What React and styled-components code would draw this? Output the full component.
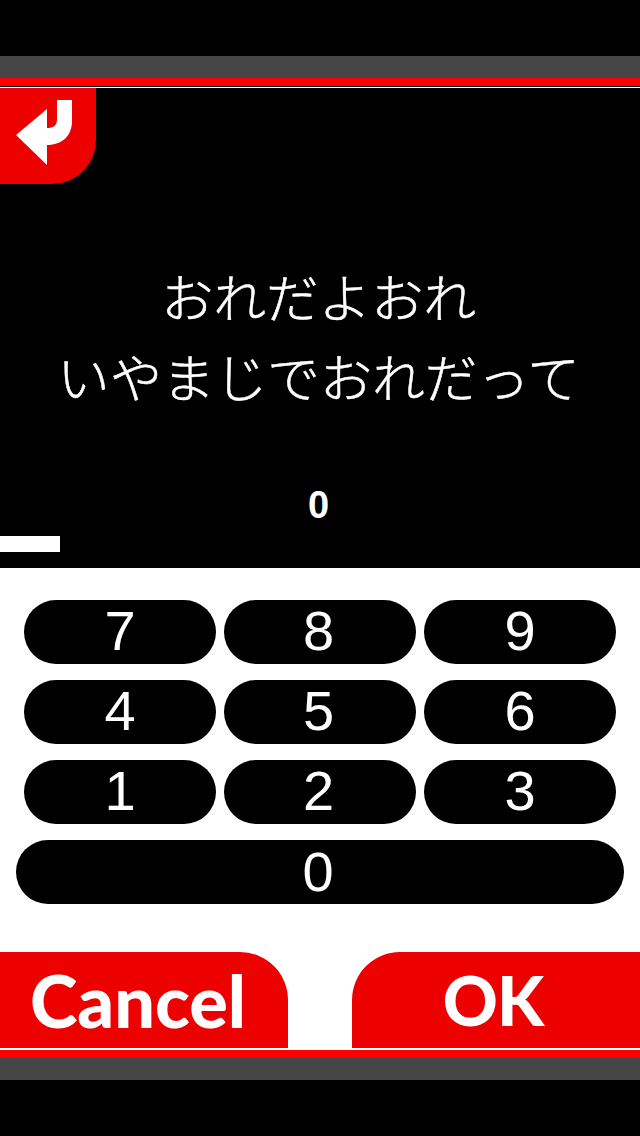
import React from "react";
import styled, { createGlobalStyle } from "styled-components";

const GlobalStyle = createGlobalStyle`
	html, body {
		margin: 0;
		padding: 0;
		background: #000;
	}
	* {
		box-sizing: border-box;
	}
`;

const jpFont = `"Noto Sans CJK JP", "Noto Sans", sans-serif`;
const digitFont = `"Liberation Sans", Arial, sans-serif`;

const Screen = styled.div`
	width: 640px;
	height: 1136px;
	display: flex;
	flex-direction: column;
	background: #000;
	overflow: hidden;
`;
const TopSpace = styled.div`
	height: 56px;
`;
const GrayBar = styled.div`
	height: 22px;
	background: #464646;
`;
const RedBar = styled.div`
	height: 8px;
	background: #ff0000;
`;
const Hairline = styled.div`
	height: 2px;
	background: linear-gradient(#000 50%, #fff 50%);
`;
const BottomLine = styled.div`
	height: 2px;
	background: #fff;
`;
const Question = styled.section`
	height: 480px;
	display: flex;
	flex-direction: column;
	color: #fff;
	font-family: ${jpFont};
`;
const BackButton = styled.button`
	width: 96px;
	height: 96px;
	padding: 0;
	border: 0;
	background: #ec0000;
	border-bottom-right-radius: 44px;
	flex: none;
	svg {
		display: block;
	}
`;
const Message = styled.div`
	margin-top: 71px;
	text-align: center;
	font-size: 52.5px;
	line-height: 80px;
	font-weight: 300;
	-webkit-text-stroke: 0.5px #fff;
	height: 160px;
	padding-right: 3px;
`;
const Count = styled.div`
	margin-top: 69px;
	height: 42px;
	line-height: 42px;
	text-align: center;
	font-family: ${digitFont};
	font-size: 38px;
	font-weight: 700;
	padding-right: 3px;
`;
const Progress = styled.div`
	margin-top: 10px;
	width: 60px;
	height: 16px;
	background: #fff;
`;
const InputPanel = styled.section`
	height: 480px;
	background: #fff;
	display: flex;
	flex-direction: column;
`;
const Keypad = styled.div`
	padding: 32px 24px 0;
	display: grid;
	grid-template-columns: 192px 192px 192px;
	grid-auto-rows: 64px;
	column-gap: 8px;
	row-gap: 16px;
`;
const Key = styled.button`
	border: 0;
	padding: 0 0 3px;
	background: #000;
	color: #fff;
	border-radius: 32px;
	font-family: ${digitFont};
	font-size: 56px;
	line-height: 1;
	font-weight: 400;
	&:nth-child(3n + 2) {
		padding-right: 3px;
	}
	${props => props.$wide && `
		grid-column: 1 / -1;
		margin: 0 -8px;
		padding: 0 4px 0 0;
	`}
`;
const Actions = styled.div`
	margin-top: auto;
	height: 96px;
	display: flex;
	justify-content: space-between;
`;
const ActionButton = styled.button`
	border: 0;
	width: 288px;
	background: #ec0000;
	color: #fff;
	font-family: Lato, "Open Sans", sans-serif;
	font-weight: 900;
	line-height: 1;
	${props =>
		props.$side === "left"
			? `
		padding: 0 12px 0 0;
		font-size: 72px;
		border-top-right-radius: 48px;
	`
			: `
		padding: 0 6px 0 0;
		font-size: 68px;
		letter-spacing: -1px;
		border-top-left-radius: 48px;
	`}
`;

const keys = ["7", "8", "9", "4", "5", "6", "1", "2", "3"];

function BackIcon() {
	return (
		<svg width='96' height='96' viewBox='0 0 96 96'>
			<path
				d='M16 47 L47 21 V40 C53 40 57 38 57 31 V12 H72 V33 C72 48 62 57 47 57 V77 Z'
				fill='#fff'
			/>
		</svg>
	);
}

export default function App() {
	return (
		<Screen>
			<GlobalStyle />
			<TopSpace />
			<GrayBar />
			<RedBar />
			<Hairline />
			<Question>
				<BackButton aria-label='back'>
					<BackIcon />
				</BackButton>
				<Message>
					おれだよおれ
					<br />
					いやまじでおれだって
				</Message>
				<Count>0</Count>
				<Progress />
			</Question>
			<InputPanel>
				<Keypad>
					{keys.map(key => (
						<Key key={key}>{key}</Key>
					))}
					<Key $wide>0</Key>
				</Keypad>
				<Actions>
					<ActionButton $side='left'>Cancel</ActionButton>
					<ActionButton $side='right'>OK</ActionButton>
				</Actions>
			</InputPanel>
			<BottomLine />
			<RedBar />
			<GrayBar />
		</Screen>
	);
}
